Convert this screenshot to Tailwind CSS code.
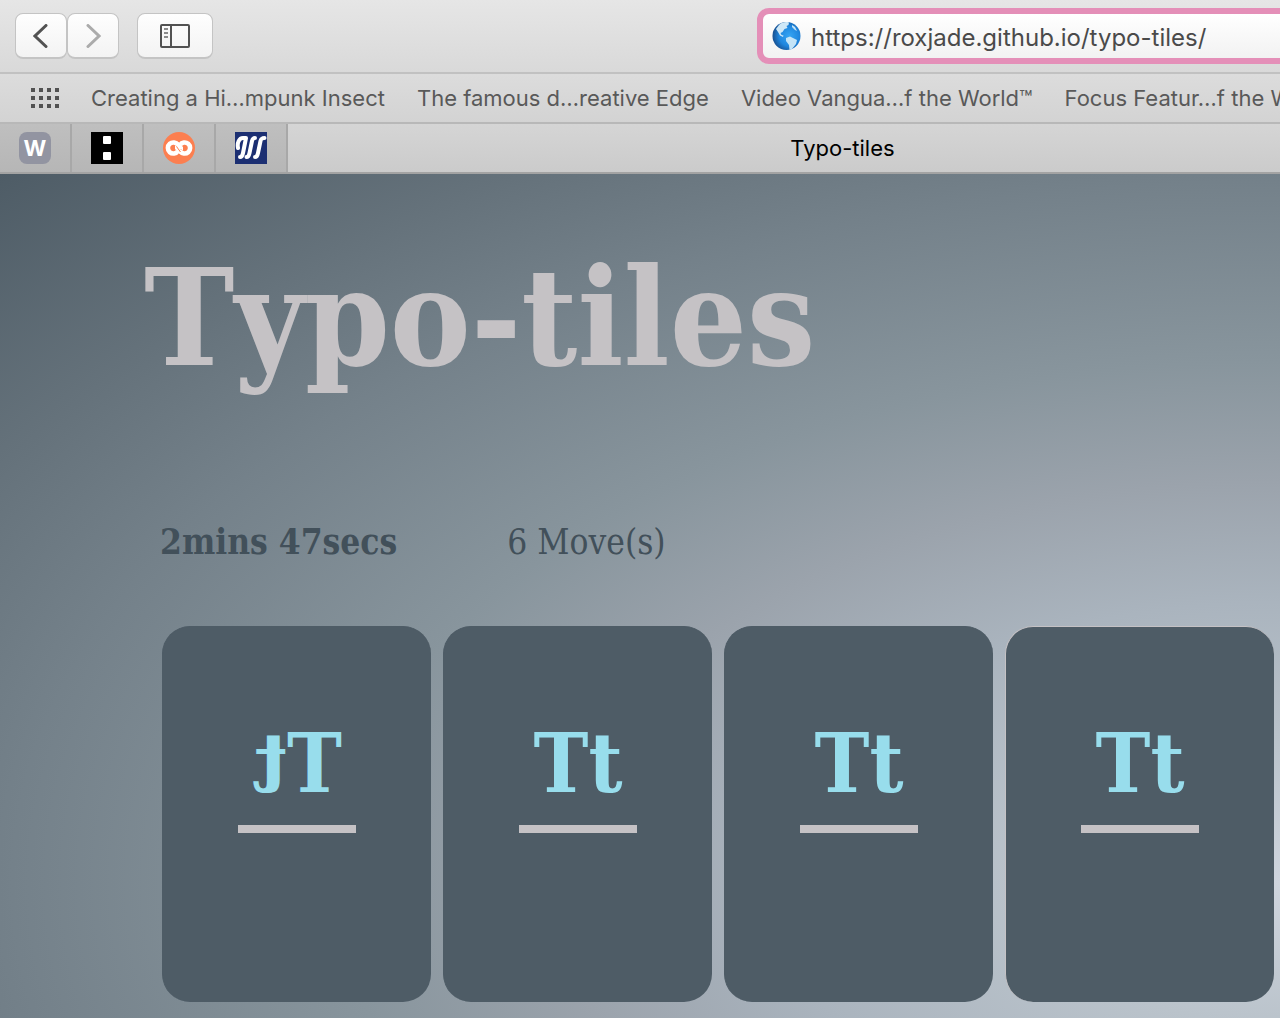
<!DOCTYPE html>
<html lang="en">
<head>
<meta charset="utf-8">
<title>Typo-tiles</title>
<script src="https://cdn.jsdelivr.net/npm/@tailwindcss/browser@4"></script>
</head>
<body class="flex min-h-screen flex-col overflow-x-hidden bg-[#d4d4d4] font-['Inter',sans-serif]">
<header class="shrink-0">
  <div class="flex h-[74px] items-center overflow-hidden border-b-2 border-[#c1c1c1] bg-linear-to-b from-[#e6e6e6] to-[#d9d9d9] pl-[15px]">
    <div class="flex shrink-0">
      <button aria-label="Back" class="flex h-[46px] w-[52px] items-center justify-center rounded-lg border border-b-2 border-[#c4c4c4] bg-linear-to-b from-[#fefefe] to-[#f3f3f3]">
        <svg class="h-6 w-4" viewBox="0 0 16 24" fill="none" stroke="#525252" stroke-width="3" stroke-linecap="round"><path d="M13 1.500 2 12l11 10.500"/></svg>
      </button>
      <button aria-label="Forward" class="flex h-[46px] w-[52px] items-center justify-center rounded-lg border border-b-2 border-[#c4c4c4] bg-linear-to-b from-[#fefefe] to-[#f3f3f3]">
        <svg class="h-6 w-4" viewBox="0 0 16 24" fill="none" stroke="#ababab" stroke-width="3" stroke-linecap="round"><path d="M3 1.500 14 12 3 22.500"/></svg>
      </button>
    </div>
    <button aria-label="Sidebar" class="ml-[18px] flex h-[46px] w-[76px] shrink-0 items-center justify-center rounded-lg border border-b-2 border-[#c4c4c4] bg-linear-to-b from-[#fefefe] to-[#f3f3f3]">
      <svg class="h-6 w-[30px]" viewBox="0 0 30 24" fill="none" stroke="#525252" stroke-width="2"><rect x="1" y="1" width="28" height="22" rx="1"/><path d="M11 1v22"/><path stroke="#8c8c8c" stroke-width="2" d="M4 5h4M4 9h4M4 13h4"/></svg>
    </button>
    <div class="-mr-8 ml-auto flex h-14 w-[555px] shrink-0 items-center rounded-xl border-6 border-[#e48fb8] bg-linear-to-b from-white to-[#f2f2f2] pl-2">
      <svg class="h-[30px] w-[30px] shrink-0" viewBox="0 0 30 30">
        <defs><radialGradient id="sea" cx=".6" cy=".5" r=".6"><stop offset="0" stop-color="#35a5f4"/><stop offset=".6" stop-color="#1f86de"/><stop offset="1" stop-color="#174f8f"/></radialGradient></defs>
        <circle cx="15.500" cy="15" r="14" fill="url(#sea)"/>
        <path fill="#cfe8f7" d="M8 4c3-3 7-3.500 10-2.500l-.5 2.500-2 1 1 2-3 1-2 3-2 1 1 2 2 .5-.5 1.500-3-1.500L7 11 5 8z"/>
        <path fill="#c4e4f7" d="M15 17l4-1.500 3 1.500 4 2-1 4-4 5-2.500 1-.5-5-3-4zM21 4l3 2 2 4-2-1-3-3z"/>
      </svg>
      <input aria-label="Address" value="https://roxjade.github.io/typo-tiles/" class="ml-2.5 min-w-0 flex-1 bg-transparent pt-1 text-2xl text-[#4a4a4a] outline-none">
    </div>
  </div>
  <nav class="flex h-[50px] items-center gap-8 overflow-hidden border-b-2 border-[#b8b8b8] bg-linear-to-b from-[#dcdcdc] to-[#d3d3d3] pl-[31px] text-[22px] whitespace-nowrap text-[#595959]">
    <svg class="h-5 w-7 shrink-0" viewBox="0 0 28 20" fill="none" stroke="#525252" stroke-width="4" stroke-dasharray="4"><path d="M0 2h28M0 10h28M0 18h28"/></svg>
    <a href="#">Creating a Hi…mpunk Insect</a>
    <a href="#">The famous d…reative Edge</a>
    <a href="#">Video Vangua…f the World™</a>
    <a href="#">Focus Featur…f the World</a>
  </nav>
  <div class="flex h-[50px] border-b-2 border-[#a3a3a3] bg-linear-to-b from-[#bfbfbf] to-[#b6b6b6]">
    <a href="#" aria-label="W" class="flex w-18 items-center justify-center border-r-2 border-[#a8a8a8]"><span class="flex h-8 w-8 items-center justify-center rounded-lg bg-[#9294a1] text-[22px] font-bold text-white">W</span></a>
    <a href="#" aria-label="Colon" class="flex w-18 items-center justify-center border-r-2 border-[#a8a8a8]"><svg class="h-8 w-8" viewBox="0 0 32 32"><path d="M0 0h32v32H0z"/><rect fill="#fff" x="12" y="4" width="8" height="8" rx="1"/><rect fill="#fff" x="12" y="20" width="8" height="8" rx="1"/></svg></a>
    <a href="#" aria-label="Loops" class="flex w-18 items-center justify-center border-r-2 border-[#a8a8a8]"><svg class="h-8 w-8" viewBox="0 0 32 32" fill="none"><circle cx="16" cy="16" r="16" fill="#fc7f50"/><g stroke="#fff" stroke-width="4.600"><path d="M15 13A5.500 5.500 0 1 0 15 19"/><path d="M17 19A5.500 5.500 0 1 0 17 13"/><path stroke-width="3.600" d="M12 15.500c2.500 0 3.500 3 6 5M20 16.500c-2.500 0-3.500-3-6-5"/></g><path stroke="#fc7f50" stroke-width="1" d="M13.500 14.500l4 5.500"/></svg></a>
    <a href="#" aria-label="Stripes" class="flex w-18 items-center justify-center border-r-2 border-[#a8a8a8]"><svg class="h-8 w-8" viewBox="0 0 32 32"><path fill="#1c2f72" d="M0 0h32v32H0z"/><g fill="none" stroke="#fff" stroke-width="4" stroke-linecap="round" stroke-linejoin="round"><path d="M3 16C2 11 4 6 8 6h3L8 21c-.6 3-1.500 4-3 4M20 6c-2 0-2.500 1-3 3l-2.500 12c-.6 3-1.500 4-3 4M29.500 6c-3 0-3.500 1-4 3L23 21c-.6 3-1.500 4-3 4"/></g></svg></a>
    <a href="#" class="flex flex-1 items-center justify-center bg-linear-to-b from-[#d5d5d5] to-[#cbcbcb] pl-[117px] text-[22px] text-black">Typo-tiles</a>
  </div>
</header>
<main class="flex-1 bg-[radial-gradient(at_100%_84%,#cfd5de_0%,#bac3cb_14%,#aab4be_28%,#9ba3ac_40%,#88959d_52%,#74818a_70%,#65727b_82%,#4e5c66_100%)] px-[6px] pb-4 pl-[144px] font-['DejaVu_Serif_Condensed','DejaVu_Serif',serif]">
  <h1 class="pt-[60px] text-[135px] leading-[168px] font-bold text-[#c5c2c5] [font-kerning:none]">Typo-tiles</h1>
  <div class="mt-[114px] flex items-center gap-[110px] pl-4 text-[35px] leading-[52px] text-[#42505a]">
    <p class="font-bold">2mins 47secs</p>
    <p>6 Move(s)</p>
  </div>
  <div class="mt-[58px] grid grid-cols-4 gap-3 pl-[18px]">
    <button class="flex h-94 flex-col items-center rounded-[28px] border-t border-l border-[#4e5c66] bg-[#4e5c66] pt-[86px]"><span class="-scale-x-100 text-[82px] leading-[100px] font-bold text-[#98ddec]">Tt</span><span class="mt-3 h-2 w-[118px] bg-[#c5c2c5]"></span></button>
    <button class="flex h-94 flex-col items-center rounded-[28px] border-t border-l border-[#4e5c66] bg-[#4e5c66] pt-[86px]"><span class="text-[82px] leading-[100px] font-bold text-[#98ddec]">Tt</span><span class="mt-3 h-2 w-[118px] bg-[#c5c2c5]"></span></button>
    <button class="flex h-94 flex-col items-center rounded-[28px] border-t border-l border-[#4e5c66] bg-[#4e5c66] pt-[86px]"><span class="text-[82px] leading-[100px] font-bold text-[#98ddec]">Tt</span><span class="mt-3 h-2 w-[118px] bg-[#c5c2c5]"></span></button>
    <button class="flex h-94 flex-col items-center rounded-[28px] border-t border-l border-[#c5c2c5] bg-[#4e5c66] pt-[86px]"><span class="text-[82px] leading-[100px] font-bold text-[#98ddec]">Tt</span><span class="mt-3 h-2 w-[118px] bg-[#c5c2c5]"></span></button>
  </div>
</main>
</body>
</html>
